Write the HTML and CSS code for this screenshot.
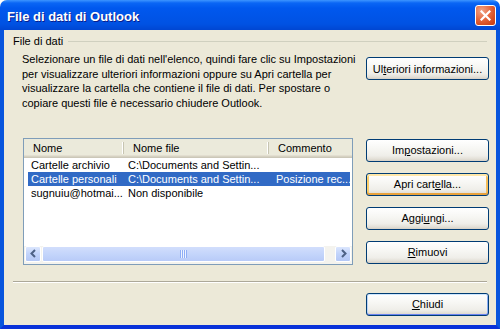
FILE: index.html
```html
<!DOCTYPE html>
<html lang="it">
<head>
    <meta charset="UTF-8">
    <title>File di dati di Outlook</title>
    <link rel="stylesheet" href="styles.css">
</head>
<body>
    <div class="window">
        <div class="titlebar">
            <span class="title">File di dati di Outlook</span>
            <button class="close" title="Chiudi">
                <svg width="11" height="11" viewBox="0 0 11 11">
                    <path d="M1.5 1.5 L9.5 9.5 M9.5 1.5 L1.5 9.5" stroke="#fff" stroke-width="2.2" stroke-linecap="square"/>
                </svg>
            </button>
        </div>

        <div class="content">
            <div class="group-head">
                <span>File di dati</span>
                <div class="group-line"></div>
            </div>

            <div class="top-row">
                <p class="desc">Selezionare un file di dati nell'elenco, quindi fare clic su Impostazioni per visualizzare ulteriori informazioni oppure su Apri cartella per visualizzare la cartella che contiene il file di dati. Per spostare o copiare questi file è necessario chiudere Outlook.</p>
                <button class="btn">Ul<u>t</u>eriori informazioni...</button>
            </div>

            <div class="mid-row">
                <div class="listview">
                    <div class="lv-head">
                        <div class="lv-col">Nome</div>
                        <div class="lv-col">Nome file</div>
                        <div class="lv-col last">Commento</div>
                    </div>
                    <div class="lv-rows">
                        <div class="lv-row">
                            <div class="cell c1">Cartelle archivio</div>
                            <div class="cell c2">C:\Documents and Settin...</div>
                            <div class="cell c3"></div>
                        </div>
                        <div class="lv-row selected">
                            <div class="cell c1">Cartelle personali</div>
                            <div class="cell c2">C:\Documents and Settin...</div>
                            <div class="cell c3">Posizione rec...</div>
                        </div>
                        <div class="lv-row">
                            <div class="cell c1">sugnuiu@hotmai...</div>
                            <div class="cell c2">Non disponibile</div>
                            <div class="cell c3"></div>
                        </div>
                    </div>
                    <div class="hscroll">
                        <div class="sb-btn">
                            <svg width="9" height="9" viewBox="0 0 9 9"><path d="M6 1 L2.5 4.5 L6 8" fill="none" stroke="#4d6185" stroke-width="2"/></svg>
                        </div>
                        <div class="sb-track">
                            <div class="sb-thumb"><span class="grip"></span></div>
                        </div>
                        <div class="sb-btn">
                            <svg width="9" height="9" viewBox="0 0 9 9"><path d="M3 1 L6.5 4.5 L3 8" fill="none" stroke="#4d6185" stroke-width="2"/></svg>
                        </div>
                    </div>
                </div>

                <div class="side-buttons">
                    <button class="btn">Im<u>p</u>ostazioni...</button>
                    <button class="btn hot">Apri cart<u>e</u>lla...</button>
                    <button class="btn">Aggi<u>u</u>ngi...</button>
                    <button class="btn"><u>R</u>imuovi</button>
                </div>
            </div>

            <div class="separator"></div>

            <div class="bottom-row">
                <button class="btn default"><u>C</u>hiudi</button>
            </div>
        </div>
    </div>
</body>
</html>
```

FILE: styles.css
```css
body {
    margin: 0;
    font-family: "Liberation Sans", Arial, sans-serif;
    font-size: 11px;
    color: #000;
    background: #fff;
}
.window {
    width: 500px;
    height: 329px;
    box-sizing: border-box;
    display: flex;
    flex-direction: column;
    background: #ece9d8;
    border-radius: 7px 7px 0 0;
    overflow: hidden;
}
.titlebar {
    height: 30px;
    flex: none;
    display: flex;
    align-items: center;
    padding: 0 4px 0 7px;
    background: linear-gradient(to bottom, #3d95ff 0, #0a66f5 3px, #0058ee 8px, #0055e9 50%, #0052e3 80%, #0046d2 100%);
}
.title {
    flex: 1;
    color: #fff;
    font-weight: bold;
    font-size: 13px;
    padding-top: 2px;
    text-shadow: 1px 1px 0 #0a1e8c;
}
.close {
    width: 21px;
    height: 21px;
    padding: 0;
    border: 1px solid #fff;
    border-radius: 3px;
    display: flex;
    align-items: center;
    justify-content: center;
    background: radial-gradient(circle at 30% 25%, #f0a488 0, #e5683f 45%, #d44b1f 75%, #c23b12 100%);
    margin-top: 1px;
}
.content {
    flex: 1;
    display: flex;
    flex-direction: column;
    padding: 5px 7px 0 9px;
    border-left: 4px solid #0855dd;
    border-right: 4px solid #0855dd;
    border-bottom: 4px solid #0831d9;
}
.group-head {
    height: 12px;
    display: flex;
    align-items: center;
}
.group-line {
    flex: 1;
    margin: 1px 2px 0 5px;
    border-top: 1px solid #d0d0bf;
}
.top-row {
    display: flex;
    align-items: flex-start;
    margin-top: 5px;
    padding-left: 9px;
}
.desc {
    margin: 0;
    width: 340px;
    line-height: 14.7px;
}
.btn {
    width: 123px;
    height: 23px;
    flex: none;
    margin-left: auto;
    padding: 0;
    font-family: inherit;
    font-size: 11px;
    color: #000;
    border: 1px solid #003c74;
    border-radius: 3px;
    background: linear-gradient(to bottom, #fff 0, #f7f7f4 40%, #efeee9 75%, #e3e0d7 90%, #d6d0c5 100%);
}
.top-row .btn {
    margin-top: 5px;
}
.btn.hot {
    box-shadow: inset 0 2px 0 #ffe7a8, inset 0 -2px 0 #e9a23b, inset 2px 0 0 #fbce6c, inset -2px 0 0 #f5be5a;
}
.btn.default {
    box-shadow: inset 0 1px 0 #cee7ff, inset 0 -1px 0 #6982ee, inset 1px 0 0 #bcd4f6, inset -1px 0 0 #89adf4;
}
.mid-row {
    display: flex;
    margin-top: 27px;
    padding-left: 10px;
}
.listview {
    width: 330px;
    height: 127px;
    box-sizing: border-box;
    border: 1px solid #7f9db9;
    background: #fff;
    display: flex;
    flex-direction: column;
}
.lv-head {
    height: 19px;
    flex: none;
    display: grid;
    grid-template-columns: 100px 145px 1fr;
    background: linear-gradient(to bottom, #ebeadb 0, #ebeadb 16px, #e2ded0 16px, #e2ded0 17px, #d6d2c2 17px, #d6d2c2 18px, #cbc7b8 18px);
}
.lv-col {
    position: relative;
    line-height: 18px;
    padding-left: 9px;
    white-space: nowrap;
    overflow: hidden;
}
.lv-col::after {
    content: "";
    position: absolute;
    right: 0;
    top: 3px;
    bottom: 4px;
    width: 1px;
    background: #c7c5b2;
    box-shadow: -1px 0 0 #fff;
}
.lv-col.last::after {
    display: none;
}
.lv-rows {
    flex: 1;
}
.lv-row {
    height: 14px;
    line-height: 14px;
    margin: 0 2px 0 4px;
    display: grid;
    grid-template-columns: 96px 145px 1fr;
}
.lv-row.selected {
    background: #316ac5;
    color: #fff;
}
.cell {
    white-space: nowrap;
    overflow: hidden;
}
.c1 {
    padding-left: 3px;
}
.c2 {
    padding-left: 4px;
}
.c3 {
    padding-left: 7px;
}
.hscroll {
    height: 17px;
    flex: none;
    display: flex;
    padding: 0 1px 1px 1px;
    background: #f4f3ee;
}
.sb-btn {
    width: 16px;
    height: 16px;
    box-sizing: border-box;
    border: 1px solid #fff;
    border-radius: 2px;
    background: linear-gradient(to bottom, #dbe6fd, #c1d3fb 50%, #b4c8f6);
    display: flex;
    align-items: center;
    justify-content: center;
}
.sb-track {
    flex: 1;
    display: flex;
    padding: 0 10px 0 1px;
}
.sb-thumb {
    flex: 1;
    height: 16px;
    box-sizing: border-box;
    border: 1px solid #fff;
    border-radius: 2px;
    background: linear-gradient(to bottom, #d2defc, #c4d5fb 50%, #b8cbf8);
    display: flex;
    align-items: center;
    justify-content: center;
}
.grip {
    width: 7px;
    height: 8px;
    background: repeating-linear-gradient(to right, #8eaef6 0, #8eaef6 1px, #eef3fe 1px, #eef3fe 2px);
}
.side-buttons {
    display: flex;
    flex-direction: column;
    gap: 11px;
    margin-left: auto;
    padding-top: 1px;
}
.separator {
    margin: 16px 2px 0 0;
    border-top: 1px solid #aca899;
    border-bottom: 1px solid #fff;
}
.bottom-row {
    display: flex;
    margin-top: 10px;
}
```
